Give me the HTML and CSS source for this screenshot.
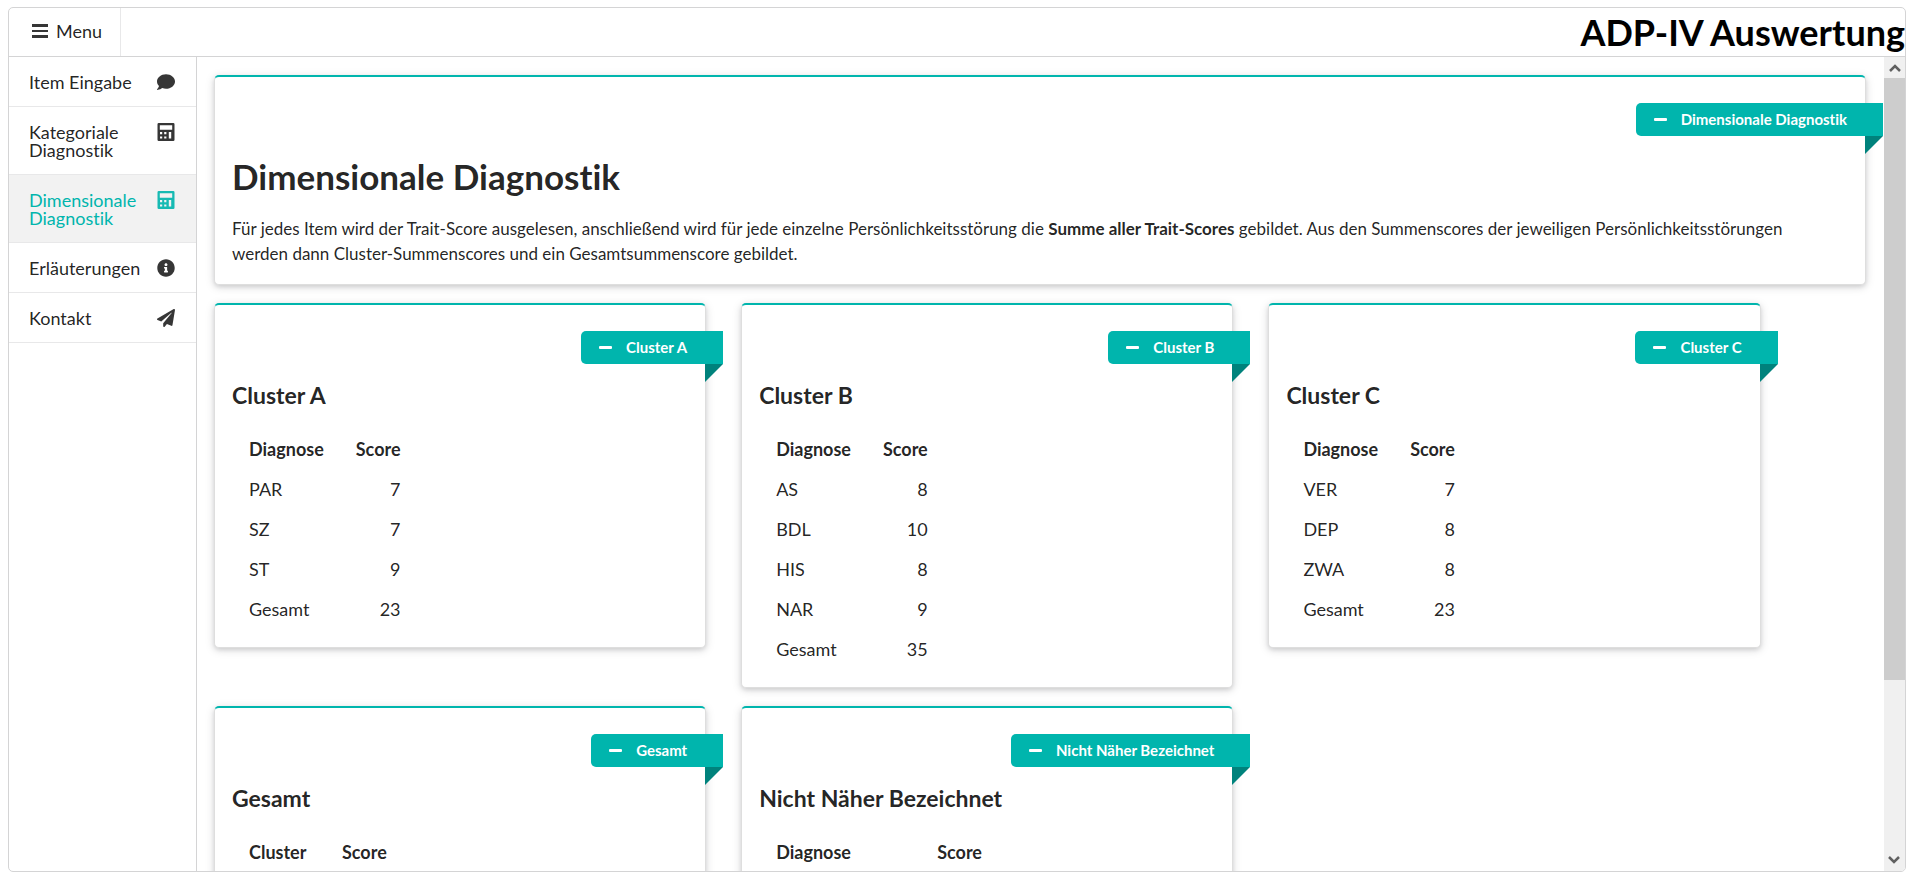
FILE: index.html
```html
<!DOCTYPE html>
<html lang="de">
<head>
<meta charset="utf-8">
<title>ADP-IV Auswertung</title>
<link rel="stylesheet" href="styles.css">
</head>
<body>
<svg class="sprite" aria-hidden="true">
  <symbol id="i-comment" viewBox="0 0 512 512"><path d="M256 32C114.600 32 0 125.100 0 240c0 49.600 21.400 95 57 130.700C44.500 421.100 2.700 466 2.200 466.500c-2.200 2.300-2.800 5.700-1.500 8.700S4.800 480 8 480c66.300 0 116-31.800 140.600-51.400 32.700 12.300 69 19.400 107.400 19.400 141.400 0 256-93.100 256-208S397.400 32 256 32z"/></symbol>
  <symbol id="i-calc" viewBox="0 0 18 18"><path fill-rule="evenodd" d="M1.700 0h14.600q1.200 0 1.200 1.200v15.600q0 1.200-1.200 1.200H1.700Q.5 18 .5 16.800V1.200Q.5 0 1.700 0zM2.800 2.300v4.500h12.400V2.300zM3 9v2.200h2.200V9zM7.200 9v2.200h2.200V9zM11.800 9v6.600h2.400V9zM3 13.400v2.200h2.200v-2.200zM7.200 13.400v2.200h2.200v-2.200z"/></symbol>
  <symbol id="i-info" viewBox="0 0 512 512"><path d="M256 8C119.043 8 8 119.083 8 256c0 136.997 111.043 248 248 248s248-111.003 248-248C504 119.083 392.957 8 256 8zm0 110c23.196 0 42 18.804 42 42s-18.804 42-42 42-42-18.804-42-42 18.804-42 42-42zm56 254c0 6.627-5.373 12-12 12h-88c-6.627 0-12-5.373-12-12v-24c0-6.627 5.373-12 12-12h12v-64h-12c-6.627 0-12-5.373-12-12v-24c0-6.627 5.373-12 12-12h64c6.627 0 12 5.373 12 12v100h12c6.627 0 12 5.373 12 12v24z"/></symbol>
  <symbol id="i-plane" viewBox="0 0 512 512"><path d="M476 3.200L12.500 270.600c-18.100 10.400-15.800 35.600 2.200 43.200L121 358.400l287.300-253.200c5.500-4.900 13.300 2.600 8.600 8.300L176 407v80.500c0 23.600 28.500 32.900 42.500 15.800L282 426l124.600 52.200c14.200 6 30.400-2.900 33-18.200l72-432C515 7.800 493.300-6.800 476 3.200z"/></symbol>
  <symbol id="i-bars" viewBox="0 0 16 14"><path d="M0 0h16v3H0zM0 6h16v2H0zM0 11h16v3H0z"/></symbol>
  <symbol id="i-minus" viewBox="0 0 13 3"><rect width="13" height="3" rx="1"/></symbol>
  <symbol id="i-up" viewBox="0 0 12 8"><path d="M1 7l5-5 5 5" fill="none" stroke="currentColor" stroke-width="2.500"/></symbol>
</svg>
<div class="frame">
  <header class="topbar">
    <button class="menu-button" type="button"><svg class="bars"><use href="#i-bars"/></svg>Menu</button>
    <h1 class="brand">ADP-IV Auswertung</h1>
  </header>
  <div class="body">
    <nav class="sidebar">
      <a class="nav-item" href="#eingabe"><span>Item Eingabe</span><svg class="icon"><use href="#i-comment"/></svg></a>
      <a class="nav-item" href="#kategorial"><span>Kategoriale Diagnostik</span><svg class="icon"><use href="#i-calc"/></svg></a>
      <a class="nav-item nav-item-active" href="#dimensional" aria-current="page"><span>Dimensionale Diagnostik</span><svg class="icon"><use href="#i-calc"/></svg></a>
      <a class="nav-item" href="#erlaeuterungen"><span>Erläuterungen</span><svg class="icon"><use href="#i-info"/></svg></a>
      <a class="nav-item" href="#kontakt"><span>Kontakt</span><svg class="icon"><use href="#i-plane"/></svg></a>
    </nav>
    <main class="content">
      <section class="card">
        <button class="ribbon" type="button"><svg class="minus"><use href="#i-minus"/></svg>Dimensionale Diagnostik</button>
        <h2 class="title">Dimensionale Diagnostik</h2>
        <p class="text">Für jedes Item wird der Trait-Score ausgelesen, anschließend wird für jede einzelne Persönlichkeitsstörung die <b>Summe aller Trait-Scores</b> gebildet. Aus den Summenscores der jeweiligen Persönlichkeitsstörungen werden dann Cluster-Summenscores und ein Gesamtsummenscore gebildet.</p>
      </section>
      <div class="grid">
        <section class="card">
          <button class="ribbon" type="button"><svg class="minus"><use href="#i-minus"/></svg>Cluster A</button>
          <h3 class="subtitle">Cluster A</h3>
          <table class="scores">
            <thead><tr><th>Diagnose</th><th>Score</th></tr></thead>
            <tbody>
              <tr><td>PAR</td><td>7</td></tr>
              <tr><td>SZ</td><td>7</td></tr>
              <tr><td>ST</td><td>9</td></tr>
              <tr><td>Gesamt</td><td>23</td></tr>
            </tbody>
          </table>
        </section>
        <section class="card">
          <button class="ribbon" type="button"><svg class="minus"><use href="#i-minus"/></svg>Cluster B</button>
          <h3 class="subtitle">Cluster B</h3>
          <table class="scores">
            <thead><tr><th>Diagnose</th><th>Score</th></tr></thead>
            <tbody>
              <tr><td>AS</td><td>8</td></tr>
              <tr><td>BDL</td><td>10</td></tr>
              <tr><td>HIS</td><td>8</td></tr>
              <tr><td>NAR</td><td>9</td></tr>
              <tr><td>Gesamt</td><td>35</td></tr>
            </tbody>
          </table>
        </section>
        <section class="card">
          <button class="ribbon" type="button"><svg class="minus"><use href="#i-minus"/></svg>Cluster C</button>
          <h3 class="subtitle">Cluster C</h3>
          <table class="scores">
            <thead><tr><th>Diagnose</th><th>Score</th></tr></thead>
            <tbody>
              <tr><td>VER</td><td>7</td></tr>
              <tr><td>DEP</td><td>8</td></tr>
              <tr><td>ZWA</td><td>8</td></tr>
              <tr><td>Gesamt</td><td>23</td></tr>
            </tbody>
          </table>
        </section>
        <section class="card card-tall">
          <button class="ribbon" type="button"><svg class="minus"><use href="#i-minus"/></svg>Gesamt</button>
          <h3 class="subtitle">Gesamt</h3>
          <table class="scores scores-total">
            <thead><tr><th>Cluster</th><th>Score</th></tr></thead>
          </table>
        </section>
        <section class="card card-tall">
          <button class="ribbon" type="button"><svg class="minus"><use href="#i-minus"/></svg>Nicht Näher Bezeichnet</button>
          <h3 class="subtitle">Nicht Näher Bezeichnet</h3>
          <table class="scores scores-wide">
            <thead><tr><th>Diagnose</th><th>Score</th></tr></thead>
          </table>
        </section>
      </div>
    </main>
    <div class="scrollbar" aria-hidden="true">
      <div class="scroll-arrow"><svg class="chevron"><use href="#i-up"/></svg></div>
      <div class="scroll-track"><div class="scroll-thumb"></div></div>
      <div class="scroll-arrow scroll-arrow-down"><svg class="chevron"><use href="#i-up"/></svg></div>
    </div>
  </div>
</div>
</body>
</html>
```
FILE: styles.css
```css
* { box-sizing: border-box; }

body {
  margin: 0;
  padding: 7px 6px 3px 8px;
  height: 100vh;
  background: #fff;
  color: rgba(0, 0, 0, 0.87);
  font: 18px/26px Lato, sans-serif;
  font-variant-ligatures: none;
}

svg { display: block; fill: currentColor; }
.sprite { position: absolute; width: 0; height: 0; }

.frame {
  display: flex;
  flex-direction: column;
  height: 100%;
  border: 1px solid #d4d4d5;
  border-radius: 5px;
  overflow: hidden;
}

.topbar {
  display: flex;
  justify-content: space-between;
  align-items: stretch;
  height: 49px;
  flex: none;
  border-bottom: 1px solid #d4d4d5;
}

.menu-button {
  display: flex;
  align-items: center;
  gap: 8px;
  padding: 0 18px 2px 23px;
  border: 0;
  border-right: 1px solid #e8e8e9;
  background: none;
  color: inherit;
  font: inherit;
}
.bars { width: 16px; height: 14px; opacity: 0.9; }

.brand {
  margin: 0;
  color: #000;
  font-size: 36px;
  line-height: 48px;
  font-weight: 700;
}

.body { display: flex; flex: 1; min-height: 0; }

.sidebar {
  width: 188px;
  flex: none;
  border-right: 1px solid #d4d4d5;
}
.nav-item {
  display: flex;
  justify-content: space-between;
  align-items: flex-start;
  padding: 16px 21px 15px 20px;
  border-bottom: 1px solid #e8e8e9;
  color: inherit;
  line-height: 18px;
  text-decoration: none;
}
.nav-item span { max-width: 116px; }
.nav-item-active { background: #f2f2f2; color: #00b5ad; }
.icon { width: 18px; height: 18px; flex: none; opacity: 0.9; }

.content {
  flex: 1;
  min-width: 0;
  padding-top: 18px;
  overflow: auto;
  scrollbar-width: none;
}
.content > .card { margin: 0 18px 18px 17px; }

.card {
  padding: 18px 17px;
  border: 1px solid #dedede;
  border-top: 2px solid #00b5ad;
  border-radius: 5px;
  background: #fff;
  box-shadow: 0 2px 4px rgba(34, 36, 38, 0.12), 0 2px 10px rgba(34, 36, 38, 0.15);
}
.card-tall { min-height: 300px; }

.grid {
  display: grid;
  grid-template-columns: repeat(3, 31.25%);
  row-gap: 18px;
  align-items: start;
  padding-bottom: 18px;
}
.grid > .card { margin: 0 18px 0 17px; }

.ribbon {
  position: relative;
  display: flex;
  align-items: center;
  gap: 14px;
  width: max-content;
  height: 33px;
  margin: 8px -35px 0 auto;
  padding: 0 36px 0 18px;
  border: 0;
  border-radius: 5px 0 0 5px;
  background: #00b5ad;
  color: #fff;
  font: 700 15px/17px Lato, sans-serif;
  font-variant-ligatures: none;
}
.ribbon::after {
  content: "";
  position: absolute;
  top: 100%;
  right: 0;
  border-top: 18px solid #00827c;
  border-right: 18px solid transparent;
}
.minus { width: 13px; height: 3px; }

.title {
  margin: 17px 0;
  font-size: 35px;
  line-height: 46px;
}
.text { margin: 0; padding-right: 18px; font-size: 17px; line-height: 25px; }

.subtitle {
  margin: 16px 0 19px;
  font-size: 23px;
  line-height: 30px;
}

.scores { border-collapse: collapse; }
.scores th,
.scores td {
  height: 40px;
  padding: 0 15px 0 17px;
  text-align: left;
}
.scores th { font-weight: 700; }
.scores td:last-child { text-align: right; }
.scores-total th:first-child { min-width: 93px; }
.scores-wide th:first-child { min-width: 161px; }

.scrollbar {
  display: flex;
  flex-direction: column;
  width: 21px;
  flex: none;
  background: #f0f0f0;
  color: #606060;
}
.scroll-arrow { display: flex; height: 21px; align-items: center; justify-content: center; }
.scroll-arrow-down { transform: rotate(180deg); }
.chevron { width: 12px; height: 8px; }
.scroll-track { flex: 1; }
.scroll-thumb { height: 78%; background: #cdcdcd; }
```
